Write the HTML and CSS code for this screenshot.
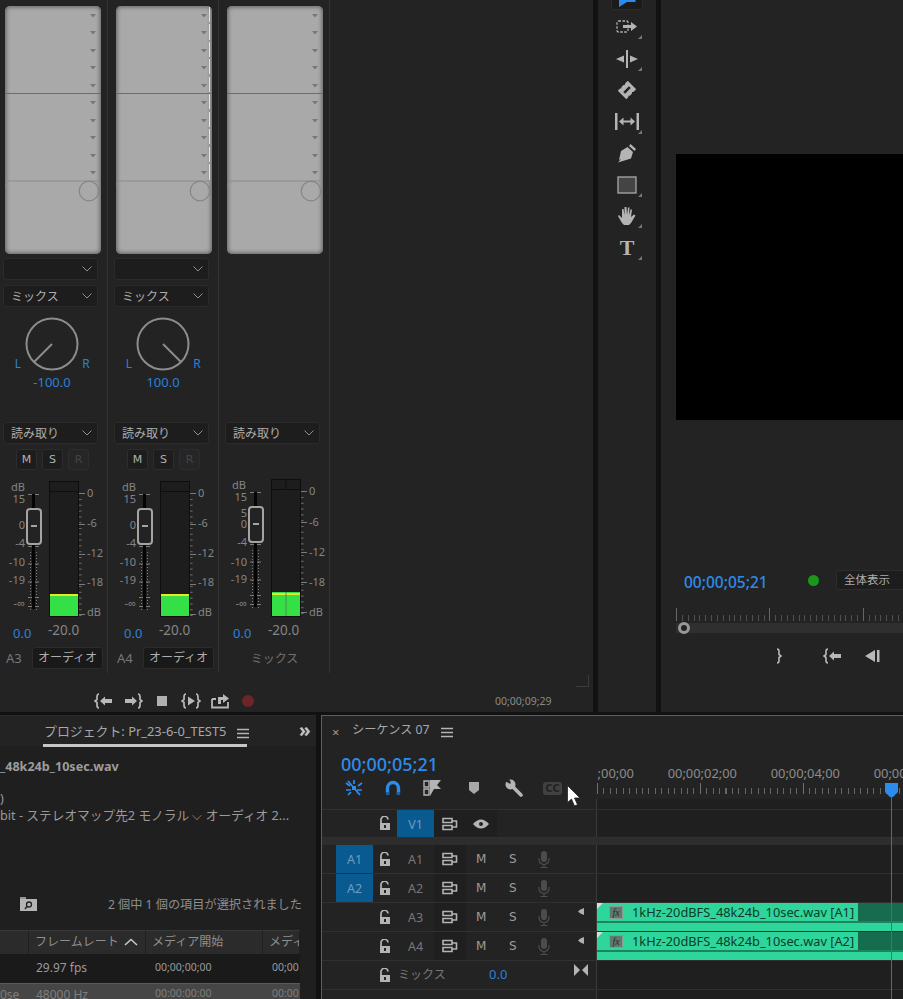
FILE: index.html
```html
<!DOCTYPE html>
<html lang="ja">
<head>
<meta charset="utf-8">
<title>Premiere Pro</title>
<link rel="stylesheet" href="styles.css">
</head>
<body>
<svg class="defs" width="0" height="0" aria-hidden="true">
  <defs>
    <symbol id="lock" viewBox="0 0 12 15"><path d="M2 7V4a3.500 3.500 0 0 1 7-.5" fill="none" stroke="#b4b4b4" stroke-width="1.700"/><path d="M1 7h10v7H1z" fill="#b4b4b4"/><rect x="5" y="9" width="2" height="3" fill="#232323"/></symbol>
    <symbol id="out" viewBox="0 0 16 14"><path d="M1 1.500h9v4H1zM1 8.500h9v4H1z" fill="none" stroke="#b4b4b4" stroke-width="1.600"/><path d="M10 4h4.500v6H10" fill="none" stroke="#b4b4b4" stroke-width="1.600"/></symbol>
    <symbol id="mic" viewBox="0 0 12 17"><rect x="3" y="0" width="6" height="11" rx="3" fill="#4c4c4c"/><path d="M1 7v1.500a5 5 0 0 0 10 0V7M6 13.500V16M2.500 16.500h7" fill="none" stroke="#4c4c4c" stroke-width="1.200"/></symbol>
    <symbol id="chev" viewBox="0 0 10 6"><path d="M.5.500 5 5 9.500.500" fill="none" stroke="#8f8f8f" stroke-width="1"/></symbol>
    <symbol id="panel" viewBox="0 0 96 248" preserveAspectRatio="none">
      <path d="M.5 87.500h95" stroke="#6d6d6d" stroke-width="1.200"/>
      <path d="M1 182v-4q0-3 3-3h90" fill="none" stroke="#8c8c8c"/>
      <circle cx="84" cy="185" r="9.800" fill="none" stroke="#858585" stroke-width="1.200"/>
      <g fill="#777"><path d="M85 8h6l-3 3.500zM85 25h6l-3 3.500zM85 43h6l-3 3.500zM85 60h6l-3 3.500zM85 78h6l-3 3.500zM85 95h6l-3 3.500zM85 113h6l-3 3.500zM85 130h6l-3 3.500zM85 148h6l-3 3.500zM85 165h6l-3 3.500z"/></g>
    </symbol>
    <symbol id="scale" viewBox="0 0 100 140">
      <g stroke="#7c7c7c" fill="none">
        <path d="M28 6.500h11M28 32.500h5M28 58.500h11M28 76h11M28 94h11M28 109.500h11M28 118.500h11"/>
        <path d="M30.500 64v60M36.500 64v60" stroke-dasharray="1 2"/>
        <path d="M79 5.500h6M79 36.500h6M79 66.500h6M79 96.500h6M79 126.500h6"/>
        <path d="M79 11v118M80 11v118M81 11v118" stroke-dasharray="1 4.800"/>
      </g>
      <rect x="32" y="6" width="3" height="115" fill="#050505"/>
    </symbol>
    <symbol id="thumb" viewBox="0 0 16 37"><rect x="1" y="1" width="14" height="35" rx="3" fill="#232323" stroke="#a4a4a4" stroke-width="2"/><rect x="5" y="17" width="6" height="2" fill="#a4a4a4"/></symbol>
  </defs>
</svg>

<div class="app">
  <div class="top">
    <section class="mixer">
      <div class="strips">
        <div class="strip">
          <div class="panel"><svg class="fill"><use href="#panel"/></svg></div>
          <div class="dd first"><span></span><svg class="chev"><use href="#chev"/></svg></div>
          <div class="dd"><span>ミックス</span><svg class="chev"><use href="#chev"/></svg></div>
          <div class="pan">
            <span class="lr">L</span>
            <svg class="knob" viewBox="0 0 54 54"><circle cx="27" cy="27" r="25.500" fill="none" stroke="#8c8c8c" stroke-width="2"/><path d="M27 27 9 45" stroke="#8c8c8c" stroke-width="2"/></svg>
            <span class="lr">R</span>
            <span class="panval">-100.0</span>
          </div>
          <div class="dd auto"><span>読み取り</span><svg class="chev"><use href="#chev"/></svg></div>
          <div class="msr"><b>M</b><b>S</b><b class="off">R</b></div>
          <svg class="meter" viewBox="0 474 108 165">
            <use href="#scale" x="0" y="488" width="100" height="140"/>
            <rect x="49.500" y="481.500" width="29" height="135" fill="#1d1d1d" stroke="#0e0e0e"/>
            <path d="M50 491.500h28" stroke="#0e0e0e"/>
            <rect x="50" y="594" width="28" height="22" fill="#35e047"/>
            <rect x="50" y="594" width="28" height="2" fill="#e6ea1e"/>
            <use href="#thumb" x="26" y="508" width="16" height="37"/>
            <g class="sc"><text x="11" y="491">dB</text></g>
            <g class="sc e"><text x="25" y="503">15</text><text x="25" y="529">0</text><text x="25" y="547">-4</text><text x="25" y="566">-10</text><text x="25" y="584">-19</text><text x="25" y="607">-∞</text></g>
            <g class="sc"><text x="87" y="497">0</text><text x="87" y="527">-6</text><text x="87" y="557">-12</text><text x="87" y="586">-18</text><text x="87" y="616">dB</text></g>
            <text class="blue" x="13" y="638">0.0</text><text class="db" x="48" y="635">-20.0</text>
          </svg>
          <div class="name"><span class="trk">A3</span><span class="type">オーディオ</span></div>
        </div>

        <div class="strip">
          <div class="panel marks"><svg class="fill"><use href="#panel"/></svg></div>
          <div class="dd first"><span></span><svg class="chev"><use href="#chev"/></svg></div>
          <div class="dd"><span>ミックス</span><svg class="chev"><use href="#chev"/></svg></div>
          <div class="pan">
            <span class="lr">L</span>
            <svg class="knob" viewBox="0 0 54 54"><circle cx="27" cy="27" r="25.500" fill="none" stroke="#8c8c8c" stroke-width="2"/><path d="M27 27 45 45" stroke="#8c8c8c" stroke-width="2"/></svg>
            <span class="lr">R</span>
            <span class="panval">100.0</span>
          </div>
          <div class="dd auto"><span>読み取り</span><svg class="chev"><use href="#chev"/></svg></div>
          <div class="msr"><b>M</b><b>S</b><b class="off">R</b></div>
          <svg class="meter" viewBox="0 474 108 165">
            <use href="#scale" x="0" y="488" width="100" height="140"/>
            <rect x="49.500" y="481.500" width="29" height="135" fill="#1d1d1d" stroke="#0e0e0e"/>
            <path d="M50 491.500h28" stroke="#0e0e0e"/>
            <rect x="50" y="594" width="28" height="22" fill="#35e047"/>
            <rect x="50" y="594" width="28" height="2" fill="#e6ea1e"/>
            <use href="#thumb" x="26" y="508" width="16" height="37"/>
            <g class="sc"><text x="11" y="491">dB</text></g>
            <g class="sc e"><text x="25" y="503">15</text><text x="25" y="529">0</text><text x="25" y="547">-4</text><text x="25" y="566">-10</text><text x="25" y="584">-19</text><text x="25" y="607">-∞</text></g>
            <g class="sc"><text x="87" y="497">0</text><text x="87" y="527">-6</text><text x="87" y="557">-12</text><text x="87" y="586">-18</text><text x="87" y="616">dB</text></g>
            <text class="blue" x="13" y="638">0.0</text><text class="db" x="48" y="635">-20.0</text>
          </svg>
          <div class="name"><span class="trk">A4</span><span class="type">オーディオ</span></div>
        </div>

        <div class="strip">
          <div class="panel master"><svg class="fill"><use href="#panel"/></svg></div>
          <div class="dd auto mixauto"><span>読み取り</span><svg class="chev"><use href="#chev"/></svg></div>
          <svg class="meter mixmeter" viewBox="0 474 108 165">
            <use href="#scale" x="0" y="486" width="100" height="140"/>
            <rect x="49.500" y="479.500" width="29" height="137" fill="#1d1d1d" stroke="#0e0e0e"/>
            <path d="M50 489.500h28M64 480v10" stroke="#0e0e0e"/>
            <rect x="50" y="592" width="28" height="24" fill="#35e047"/>
            <rect x="50" y="593" width="28" height="2" fill="#e6ea1e"/>
            <path d="M64 592v24" stroke="#4d8c50" stroke-width="1"/>
            <use href="#thumb" x="26" y="506" width="16" height="37"/>
            <g class="sc"><text x="10" y="489">dB</text></g>
            <g class="sc e"><text x="25" y="501">15</text><text x="25" y="517">5</text><text x="25" y="528">0</text><text x="25" y="546">-4</text><text x="25" y="566">-10</text><text x="25" y="583">-19</text><text x="25" y="607">-∞</text></g>
            <g class="sc"><text x="87" y="495">0</text><text x="87" y="526">-6</text><text x="87" y="556">-12</text><text x="87" y="586">-18</text><text x="87" y="616">dB</text></g>
            <text class="blue" x="11" y="638">0.0</text><text class="db" x="46" y="635">-20.0</text>
          </svg>
          <div class="name mixname">ミックス</div>
        </div>
        <div class="strip-rest"></div>
      </div>
      <div class="transport">
        <svg class="ti" viewBox="0 0 20 20"><path d="M5 3q-2 0-2 3v2.500L1 10l2 1.500V14q0 3 2 3" fill="none" stroke="#b8b8b8" stroke-width="1.700"/><path d="M6 10l5-4.500V8h7v4h-7v2.500z" fill="#b8b8b8"/></svg>
        <svg class="ti" viewBox="0 0 20 20"><path d="M2 8h7V5.500l5 4.500-5 4.500V12H2z" fill="#b8b8b8"/><path d="M15 3q2 0 2 3v2.500l2 1.500-2 1.500V14q0 3-2 3" fill="none" stroke="#b8b8b8" stroke-width="1.700"/></svg>
        <svg class="ti" viewBox="0 0 20 20"><rect x="5" y="5" width="10" height="10" fill="#b0b0b0"/></svg>
        <svg class="ti" viewBox="0 0 20 20"><path d="M5 3q-2 0-2 3v2.500L1 10l2 1.500V14q0 3 2 3M15 3q2 0 2 3v2.500l2 1.500-2 1.500V14q0 3-2 3" fill="none" stroke="#b8b8b8" stroke-width="1.700"/><path d="M7 5.500 14 10l-7 4.500z" fill="#b8b8b8"/></svg>
        <svg class="ti" viewBox="0 0 20 20"><path d="M2 8v8.500h16V11M2 8h4" fill="none" stroke="#b8b8b8" stroke-width="1.800"/><path d="M8 13V6h5V3l6 4.500-6 4.500V9h-2v4z" fill="#b8b8b8"/></svg>
        <svg class="ti" viewBox="0 0 20 20"><circle cx="9" cy="10" r="6" fill="#6e2526"/></svg>
        <span class="mixtime">00;00;09;29</span>
      </div>
      <i class="grip"></i>
    </section>

    <nav class="tools">
      <div class="tool sel"><svg viewBox="0 0 17 8" width="17" height="8"><path d="M0 0v7l8-5h8.500V0z" fill="#2d8ceb"/></svg></div>
      <div class="tool more"><svg viewBox="0 0 22 16" width="22" height="16"><rect x="1" y="2" width="11" height="11" rx="1.500" fill="none" stroke="#b4b4b4" stroke-width="1.300" stroke-dasharray="2.500 1.500"/><path d="M7 6h8V3l6 4.500-6 4.500V9H7z" fill="#b4b4b4"/></svg></div>
      <div class="tool more"><svg viewBox="0 0 24 18" width="24" height="18"><path d="M1 9l8-3.500v7zM23 9l-8-3.500v7z" fill="#b4b4b4"/><rect x="11" y="0" width="2" height="18" fill="#b4b4b4"/></svg></div>
      <div class="tool"><svg viewBox="0 0 20 20" width="20" height="20"><g transform="rotate(45 10 10)"><path d="M4 3h12v4l-1 1 1 1v3l-1 1 1 1v3H4v-3l1-1-1-1V9l1-1-1-1z" fill="#b4b4b4"/><path d="M10 6v8" stroke="#232323" stroke-width="2.600"/></g></svg></div>
      <div class="tool more"><svg viewBox="0 0 26 18" width="26" height="18"><path d="M1 0h2.500v17H1zM22.500 0H25v17h-2.500z" fill="#b4b4b4"/><path d="M5 8.500l4.500-4v3h7v-3l4.500 4-4.500 4v-3h-7v3z" fill="#b4b4b4"/></svg></div>
      <div class="tool"><svg viewBox="0 0 20 20" width="20" height="20"><path d="M13.500 1 19 6l-1.500 2L12 3zM10.500 4l5.500 5-2 6.500-13 4 5.500-6.500a1.500 1.500 0 1 1 1 1L2 17l2-9z" fill="#b4b4b4"/></svg></div>
      <div class="tool more"><svg viewBox="0 0 20 18" width="20" height="18"><rect x="1" y="1" width="18" height="16" fill="#444" stroke="#a8a8a8" stroke-width="1.300"/></svg></div>
      <div class="tool more"><svg viewBox="0 0 20 20" width="20" height="20"><path d="M5 17 1 10l1-1 3 3V3h1.500l1 6V1h2l.5 8 1-7.500h1.500L12 9l1.500-5.500H15L14 11l3-2.500 1.500 1L14 17l-2 2H7z" fill="#b4b4b4"/></svg></div>
      <div class="tool more"><span class="tglyph">T</span></div>
    </nav>

    <section class="program">
      <div class="video"></div>
      <div class="pg-info">
        <span class="pg-time">00;00;05;21</span>
        <i class="dot"></i>
        <span class="fit">全体表示</span>
      </div>
      <div class="pg-ruler"></div>
      <div class="pg-bar"><i class="handle"></i></div>
      <div class="pg-btns">
        <svg viewBox="0 0 10 16" width="10" height="16"><path d="M3 1q2 0 2 2.500v3L7 8 5 9.500v3Q5 15 3 15" fill="none" stroke="#b8b8b8" stroke-width="1.600"/></svg>
        <svg viewBox="0 0 20 16" width="20" height="16"><path d="M5 1Q3 1 3 3.500v3L1 8l2 1.500v3Q3 15 5 15" fill="none" stroke="#b8b8b8" stroke-width="1.600"/><path d="M6 8l5-4.500V6h7v4h-7v2.500z" fill="#b8b8b8"/></svg>
        <svg viewBox="0 0 16 14" width="16" height="14"><path d="M0 7l10-6v12z" fill="#b8b8b8"/><rect x="12" y="1" width="2.500" height="12" fill="#b8b8b8"/></svg>
      </div>
    </section>
  </div>

  <div class="bottom">
    <section class="project">
      <div class="pj-tabs">
        <span class="pj-tab">プロジェクト: Pr_23-6-0_TEST5<svg class="menu"><path d="M0 1.500h12M0 5.500h12M0 9.500h12" stroke="#b4b4b4" stroke-width="1.300"/></svg></span>
        <span class="pj-more">»</span>
      </div>
      <div class="pj-body">
        <p class="pj-name">_48k24b_10sec.wav</p>
        <p class="pj-line tiny">)</p>
        <p class="pj-line">bit - ステレオマップ先2 モノラル ⌵ オーディオ 2...</p>
        <div class="pj-status">
          <svg viewBox="0 0 17 14" width="17" height="14"><path d="M0 0h6v2h11v12H0z" fill="#b4b4b4"/><path d="M0 1h6" stroke="#777"/><circle cx="9" cy="7.500" r="2.500" fill="none" stroke="#222" stroke-width="1.300"/><path d="M7 9.500 5 12" stroke="#222" stroke-width="1.500"/></svg>
          <span>2 個中 1 個の項目が選択されました</span>
        </div>
        <div class="pj-table">
          <div class="th"></div><div class="th">フレームレート<svg class="sort" viewBox="0 0 14 8"><path d="M1 7l6-5.500L13 7" fill="none" stroke="#c8c8c8" stroke-width="1.600"/></svg></div><div class="th">メディア開始</div><div class="th">メディ</div>
          <div class="td"></div><div class="td">29.97 fps</div><div class="td tc">00;00;00;00</div><div class="td tc">00;00</div>
          <div class="td sel"><span class="clipl">0se</span></div><div class="td sel">48000 Hz</div><div class="td sel tc">00:00:00:00</div><div class="td sel tc">00:00</div>
        </div>
      </div>
    </section>

    <section class="timeline">
      <div class="tl-head">
        <div class="tl-left">
          <div class="tl-tab"><span class="x">×</span><span class="seq">シーケンス 07</span><svg class="menu"><path d="M0 1.500h12M0 5.500h12M0 9.500h12" stroke="#b4b4b4" stroke-width="1.300"/></svg></div>
          <div class="tl-time">00;00;05;21</div>
          <div class="tl-tools">
            <svg viewBox="0 0 18 18" width="18" height="18"><path d="M1 4l4 3M17 4l-4 3M9 1v4M1 11h5M12 11h5M3 16l3-3M15 16l-3-3M3 2 15 16" stroke="#2d8ceb" stroke-width="1.700" fill="none"/><rect x="7" y="7" width="4" height="4" fill="#2d8ceb"/></svg>
            <svg viewBox="0 0 16 16" width="16" height="16"><path d="M2.500 13V8a5.500 5.500 0 0 1 11 0v5" fill="none" stroke="#2d8ceb" stroke-width="3.400"/><path d="M1 12h3.500v3H1zM11.500 12H15v3h-3.500z" fill="#1e5f9e"/></svg>
            <svg viewBox="0 0 18 16" width="18" height="16"><path d="M1 1h5v6H1zM1 9h5v6H1z" fill="none" stroke="#b4b4b4" stroke-width="1.400"/><path d="M7 0h11l-4 5 4 4H11l-4 7z" fill="#b4b4b4"/></svg>
            <svg viewBox="0 0 10 12" width="10" height="12"><path d="M0 0h10v8l-5 4-5-4z" fill="#a8a8a8"/></svg>
            <svg viewBox="0 0 18 18" width="18" height="18"><circle cx="5.500" cy="5.500" r="5" fill="#b4b4b4"/><path d="M6 6 16 16" stroke="#b4b4b4" stroke-width="3.600" stroke-linecap="round"/><path d="M5.500 5 1.500 3 0 0h3l2.500 2z" fill="#232323"/></svg>
            <span class="cc">CC</span>
          </div>
        </div>
        <div class="tl-ruler">
          <div class="tl-labels"><span>;00;00</span><span>00;00;02;00</span><span>00;00;04;00</span><span>00;00;06;00</span></div>
          <div class="tl-ticks"></div>
        </div>
      </div>

      <div class="tl-body">
        <div class="row spacer"><div class="hdr"></div><div class="lane"></div></div>
        <div class="row vrow">
          <div class="hdr"><i class="tg"></i><i class="lk"><svg><use href="#lock"/></svg></i><span class="tg on">V1</span><i class="ic dark"><svg class="o"><use href="#out"/></svg></i><i class="ic dark"><svg viewBox="0 0 16 10" width="16" height="10"><path d="M0 5q8-9 16 0-8 9-16 0z" fill="#b4b4b4"/><circle cx="8" cy="5" r="2" fill="#232323"/></svg></i></div>
          <div class="lane"></div>
        </div>
        <div class="band"></div>
        <div class="row">
          <div class="hdr"><span class="tg on">A1</span><i class="lk"><svg><use href="#lock"/></svg></i><span class="tg">A1</span><i class="ic dark"><svg class="o"><use href="#out"/></svg></i><i class="ic">M</i><i class="ic">S</i><i class="ic"><svg class="m"><use href="#mic"/></svg></i></div>
          <div class="lane"></div>
        </div>
        <div class="row">
          <div class="hdr"><span class="tg on">A2</span><i class="lk"><svg><use href="#lock"/></svg></i><span class="tg">A2</span><i class="ic dark"><svg class="o"><use href="#out"/></svg></i><i class="ic">M</i><i class="ic">S</i><i class="ic"><svg class="m"><use href="#mic"/></svg></i></div>
          <div class="lane"></div>
        </div>
        <div class="row">
          <div class="hdr"><i class="tg"></i><i class="lk"><svg><use href="#lock"/></svg></i><span class="tg">A3</span><i class="ic dark"><svg class="o"><use href="#out"/></svg></i><i class="ic">M</i><i class="ic">S</i><i class="ic"><svg class="m"><use href="#mic"/></svg></i><i class="spk"></i></div>
          <div class="lane clip"><div class="clip-h"><span class="clip-n"><em class="fx">fx</em>1kHz-20dBFS_48k24b_10sec.wav [A1]</span><i class="clip-d"></i></div></div>
        </div>
        <div class="row">
          <div class="hdr"><i class="tg"></i><i class="lk"><svg><use href="#lock"/></svg></i><span class="tg">A4</span><i class="ic dark"><svg class="o"><use href="#out"/></svg></i><i class="ic">M</i><i class="ic">S</i><i class="ic"><svg class="m"><use href="#mic"/></svg></i><i class="spk"></i></div>
          <div class="lane clip"><div class="clip-h"><span class="clip-n"><em class="fx">fx</em>1kHz-20dBFS_48k24b_10sec.wav [A2]</span><i class="clip-d"></i></div></div>
        </div>
        <div class="row">
          <div class="hdr"><i class="tg"></i><i class="lk"><svg><use href="#lock"/></svg></i><span class="mixlabel">ミックス</span><span class="mixval">0.0</span><svg class="bow" viewBox="0 0 14 12"><path d="M0 0l6 6-6 6zM14 0 8 6l6 6z" fill="#b4b4b4"/></svg></div>
          <div class="lane"></div>
        </div>
        <div class="row"><div class="hdr"></div><div class="lane"></div></div>
      </div>

      <div class="playhead"><svg viewBox="0 0 13 14" width="13" height="14"><path d="M0 0h13v9l-5 5H5L0 9z" fill="#2d8ceb"/></svg><i></i></div>
      <svg class="cursor" viewBox="0 0 14 22" width="14" height="22"><path d="M.5.500v17l4-3.500 3 7 3-1.300-3-6.700h5.500z" fill="#fff" stroke="#222" stroke-width=".8"/></svg>
    </section>
  </div>
</div>
</body>
</html>
```

FILE: styles.css
```css
* { box-sizing: border-box; }
html, body { margin: 0; height: 100%; overflow: hidden; background: #111; }
body { font: 12px "Noto Sans", "Noto Sans CJK JP", sans-serif; color: #a8a8a8; }
.defs { position: absolute; }
i { display: block; font-style: normal; }
p { margin: 0; }

.app { width: 903px; height: 999px; display: flex; flex-direction: column; overflow: hidden; }
.top { height: 712px; display: flex; flex: none; }
.bottom { flex: 1; display: flex; padding-top: 3px; gap: 5px; min-height: 0; }

/* Mixer */
.mixer { width: 593px; flex: none; background: #232323; position: relative; overflow: hidden; }
.strips { display: flex; height: 673px; margin-left: -3px; }
.strip { width: 111px; flex: none; border-right: 1px solid #333; display: flex; flex-direction: column; align-items: flex-start; }
.strip-rest { flex: 1; }
.panel { margin: 6px 0 0 8px; width: 96px; height: 248px; flex: none; background: #a9a9a9; border-radius: 5px; box-shadow: inset 0 0 4px 1px #5f5f5f; position: relative; }
.panel.marks::after { content: ""; position: absolute; right: 2px; top: 1px; width: 1px; height: 175px; background: repeating-linear-gradient(180deg, #e4e4e4 0 15px, transparent 15px 17.500px); }
.fill { display: block; width: 100%; height: 100%; }
.dd { margin: 5px 0 0 6px; width: 95px; height: 22px; flex: none; background: #1d1d1d; border: 1px solid #2b2b2b; border-radius: 3px; display: flex; align-items: center; justify-content: space-between; padding: 0 5px 0 7px; font-size: 12px; color: #adadad; }
.dd.first { margin-top: 4px; }
.dd.auto { margin-top: 0; }
.dd.mixauto { margin-top: 168px; }
.chev { width: 10px; height: 6px; flex: none; }
.pan { margin: 10px 0 0 14px; display: grid; grid-template-columns: 14px 54px 14px; height: 105px; align-content: start; }
.lr { align-self: end; text-align: center; color: #2b80d8; font-size: 12px; line-height: 14px; }
.knob { display: block; width: 54px; height: 54px; }
.panval { grid-column: 1 / -1; text-align: center; color: #2b80d8; font-size: 13px; line-height: 16px; margin-top: 3px; }
.msr { margin: 5px 0 0 19px; display: flex; gap: 5px; }
.msr b { width: 21px; height: 21px; background: #1d1d1d; border: 1px solid #2d2d2d; border-radius: 3px; font: 400 11px/19px "DejaVu Sans", sans-serif; text-align: center; color: #b0b0b0; }
.msr b.off { color: #444; background: #262626; }
.meter { display: block; width: 108px; height: 165px; margin: 4px 0 0 3px; flex: none; overflow: visible; }
.mixmeter { margin-top: 30px; }
.sc text { font: 11px "Noto Sans", sans-serif; fill: #858585; }
.sc.e text { text-anchor: end; }
text.blue { font: 13px "Noto Sans", sans-serif; fill: #2b80d8; }
text.db { font: 13.500px "Noto Sans", sans-serif; fill: #858585; }
.name { display: flex; align-items: center; margin: 8px 0 0 9px; height: 22px; }
.trk { width: 26px; color: #777; font-size: 13px; }
.type { width: 71px; height: 22px; background: #191919; border: 1px solid #2b2b2b; border-radius: 3px; text-align: center; font-size: 12px; line-height: 20px; color: #adadad; }
.mixname { display: block; width: 110px; margin-left: 0; padding-left: 1px; text-align: center; color: #717171; line-height: 22px; font-size: 12px; margin-top: 9px; }
.transport { display: flex; align-items: center; gap: 9px; padding: 17px 0 0 94px; height: 39px; }
.ti { width: 20px; height: 20px; flex: none; }
.mixtime { margin-left: 227px; font-size: 10.500px; color: #8a8a8a; }
.grip { position: absolute; left: 576px; top: 675px; width: 13px; height: 12px; border-right: 1px solid #3a3a3a; border-bottom: 1px solid #3a3a3a; }

/* Tools */
.tools { width: 58px; margin-left: 5px; flex: none; background: #232323; display: flex; flex-direction: column; align-items: center; }
.tool { width: 32px; height: 31.500px; flex: none; display: flex; align-items: center; justify-content: center; position: relative; }
.tool.sel { align-items: flex-start; background: #1b1b1b; border: 1px solid #2a2a2a; border-top: 0; border-radius: 0 0 3px 3px; height: 10px; }
.tool.sel + .tool { margin-top: 1.500px; }
.more::after { content: ""; position: absolute; right: 1px; bottom: 4px; border: 2px solid transparent; border-right-color: #777; border-bottom-color: #777; }
.tglyph { font: 700 22px/1 "Liberation Serif", serif; color: #b4b4b4; }

/* Program monitor */
.program { flex: 1; margin-left: 5px; background: #232323; padding: 154px 0 0 15px; min-width: 0; overflow: hidden; }
.video { height: 266px; background: #000; margin-right: -20px; }
.pg-info { display: flex; align-items: center; height: 22px; margin-top: 149px; padding-left: 8px; white-space: nowrap; }
.pg-time { color: #2d8ceb; font-size: 15.500px; line-height: 26px; font-weight: 500; width: 124px; flex: none; margin-top: 3px; }
.dot { width: 11px; height: 11px; border-radius: 50%; background: #1c961c; flex: none; }
.fit { margin-left: 17px; width: 80px; height: 20px; flex: none; background: #1d1d1d; border: 1px solid #2c2c2c; border-radius: 3px; padding-left: 7px; font-size: 11.500px; line-height: 18px; color: #adadad; }
.pg-ruler { height: 13px; margin-top: 17px; background:
  repeating-linear-gradient(90deg, #666 0 1px, transparent 1px 93.400px) 0 0 / 100% 13px no-repeat,
  repeating-linear-gradient(90deg, #505050 0 1px, transparent 1px 5.840px) 0 100% / 100% 6px no-repeat; }
.pg-bar { height: 10px; background: #2f2f2f; margin-top: 2px; position: relative; }
.handle { position: absolute; left: 2px; top: -1px; width: 12px; height: 12px; border: 3px solid #999; border-radius: 50%; background: #232323; }
.pg-btns { display: flex; align-items: center; height: 16px; margin-top: 15px; padding-left: 98px; gap: 39px; }
.pg-btns svg { flex: none; }
.pg-btns svg + svg + svg { margin-left: -17px; }

/* Project */
.project { width: 316px; flex: none; background: #1f1f1f; overflow: hidden; border-top: 1px solid #2a2a2a; }
.pj-tabs { height: 30px; background: #232323; position: relative; }
.pj-tab { position: absolute; left: 43px; top: 7px; width: 204px; height: 24px; padding-left: 1px; border-bottom: 3px solid #c6c6c6; font-size: 12.900px; line-height: 17px; color: #a8a8a8; white-space: nowrap; }
.menu { position: absolute; width: 12px; height: 11px; }
.pj-tab .menu { left: 194px; top: 5px; }
.pj-more { position: absolute; left: 299px; top: 0; font: 700 19px/28px "Noto Sans", sans-serif; color: #c4c4c4; }
.pj-body { padding-top: 13px; }
.pj-name { font-weight: 700; color: #9c9c9c; font-size: 12.600px; line-height: 16px; white-space: nowrap; }
.pj-line { font-size: 12.700px; line-height: 17px; color: #9a9a9a; white-space: nowrap; }
.pj-line.tiny { margin-top: 15px; height: 17px; }
.pj-status { display: flex; align-items: center; justify-content: space-between; padding: 0 14px 0 20px; margin-top: 70px; height: 20px; font-size: 12.200px; color: #8e8e8e; }
.pj-table { display: grid; grid-template-columns: 29px 117px 117px 37px; width: 300px; margin-top: 16px; grid-template-rows: 24px 29px 18px; overflow: hidden; background: #1a1a1a; white-space: nowrap; }
.th { background: #2b2b2b; border-top: 1px solid #383838; border-right: 1px solid #202020; padding-left: 6px; line-height: 21px; color: #8f8f8f; font-size: 12px; overflow: hidden; }
.sort { width: 14px; height: 8px; margin-left: 5px; }
.td { padding: 5px 0 0 7px; color: #9a9a9a; font-size: 12px; overflow: hidden; }
.td.tc { font-size: 10.500px; padding-left: 9px; padding-top: 6px; }
.td.sel { background: #464646; color: #7e7e7e; border-top: 1px solid #5a5a5a; padding-top: 2px; }
.clipl { margin-left: -7px; }

/* Timeline */
.timeline { flex: 1; min-width: 0; position: relative; background: #232323; border: 1px solid #2a6aa8; border-width: 1px 0 0 1px; overflow: hidden; }
.tl-head { height: 83px; display: flex; }
.tl-left { width: 275px; flex: none; position: relative; }
.tl-tab { height: 28px; position: relative; }
.x { position: absolute; left: 10px; top: 7px; font-size: 13px; line-height: 18px; color: #9a9a9a; }
.seq { position: absolute; left: 30px; top: 5px; font-size: 12.200px; line-height: 18px; color: #a8a8a8; white-space: nowrap; }
.tl-tab .menu { left: 119px; top: 11px; }
.tl-time { margin: 8px 0 0 19px; color: #2d8ceb; font-size: 18px; line-height: 24px; font-weight: 500; }
.tl-tools { display: flex; align-items: center; height: 20px; margin-top: 2px; position: relative; }
.tl-tools svg, .cc { position: absolute; }
.tl-tools svg:nth-child(1) { left: 23px; }
.tl-tools svg:nth-child(2) { left: 63px; }
.tl-tools svg:nth-child(3) { left: 101px; }
.tl-tools svg:nth-child(4) { left: 147px; }
.tl-tools svg:nth-child(5) { left: 183px; }
.cc { left: 221px; top: 4px; width: 19px; height: 13px; background: #414141; border-radius: 3px; font: 700 10px/13px "DejaVu Sans", sans-serif; text-align: center; color: #232323; }
.tl-ruler { flex: 1; min-width: 0; background: #232323; padding-top: 49px; overflow: hidden; }
.tl-labels { display: flex; white-space: nowrap; height: 17px; font-size: 12.900px; line-height: 16px; color: #8c8c8c; }
.tl-labels span { flex: none; width: 103px; text-align: right; }
.tl-labels span:first-child { width: 37px; }
.tl-ticks { height: 11px; margin-top: 1px; background:
  repeating-linear-gradient(90deg, #707070 0 1px, transparent 1px 102.800px) 0 0 / 100% 11px no-repeat,
  repeating-linear-gradient(90deg, #666 0 1px, transparent 1px 6.425px) 0 100% / 100% 6px no-repeat; }

.tl-body { display: flex; flex-direction: column; }
.row { display: flex; height: 29px; flex: none; border-bottom: 1px solid #303030; }
.row.spacer { height: 11px; }
.row.vrow { height: 28px; }
.band { height: 7px; background: #2d2d2d; flex: none; }
.hdr { width: 275px; flex: none; display: flex; align-items: stretch; padding-left: 14px; border-right: 1px solid #3a3a3a; position: relative; }
.lane { flex: 1; min-width: 0; background: #1f1f1f; }
.tg { width: 37px; flex: none; text-align: center; font-size: 12.500px; line-height: 29px; color: #777; }
.tg.on { background: #0a5a92; color: #6d9cbf; }
.lk { width: 24px; flex: none; display: flex; align-items: center; justify-content: center; }
.lk svg { width: 12px; height: 15px; }
.ic { width: 31.500px; flex: none; display: flex; align-items: center; justify-content: center; font: 12px "DejaVu Sans", sans-serif; color: #9c9c9c; }
.ic.dark { background: #1f1f1f; }
.ic .o { width: 16px; height: 14px; }
.ic .m { width: 12px; height: 17px; }
.spk { margin: 5px 0 0 18px; width: 6px; height: 7px; background: #b0b0b0; clip-path: polygon(0 50%, 40% 20%, 100% 0, 100% 100%, 40% 80%); flex: none; }
.mixlabel { width: 50px; flex: none; margin-left: 1px; font-size: 12px; line-height: 27px; color: #777; white-space: nowrap; }
.mixval { margin-left: 41px; color: #2b80d8; font-size: 13px; line-height: 27px; }
.bow { position: absolute; left: 252px; top: 3px; width: 14px; height: 12px; }

.clip { background: #2ed69b; position: relative; overflow: hidden; }
.clip::before { content: ""; position: absolute; left: 0; top: 0; border: 3px solid transparent; border-top-color: #ddd; border-left-color: #ddd; z-index: 1; }
.clip-h { display: flex; height: 20px; border-bottom: 2px solid #1c8560; }
.clip-n { width: 261px; flex: none; display: flex; align-items: center; padding-left: 12px; font-size: 12.800px; line-height: 16px; color: #0e3a2b; white-space: nowrap; }
.fx { width: 14px; height: 13px; margin-right: 9px; background: #5f7a6f; border: 1px solid #8a9a92; font: italic 10px/11px "Liberation Serif", serif; text-align: center; color: #2a2a2a; flex: none; }
.clip-d { flex: 1; background: #176b4e; }

.playhead { position: absolute; left: 563px; top: 67px; bottom: 0; width: 13px; display: flex; flex-direction: column; align-items: center; }
.playhead svg { flex: none; }
.playhead i { flex: 1; width: 1px; background: #2b74bc; }
.cursor { position: absolute; left: 245px; top: 69px; }
```
